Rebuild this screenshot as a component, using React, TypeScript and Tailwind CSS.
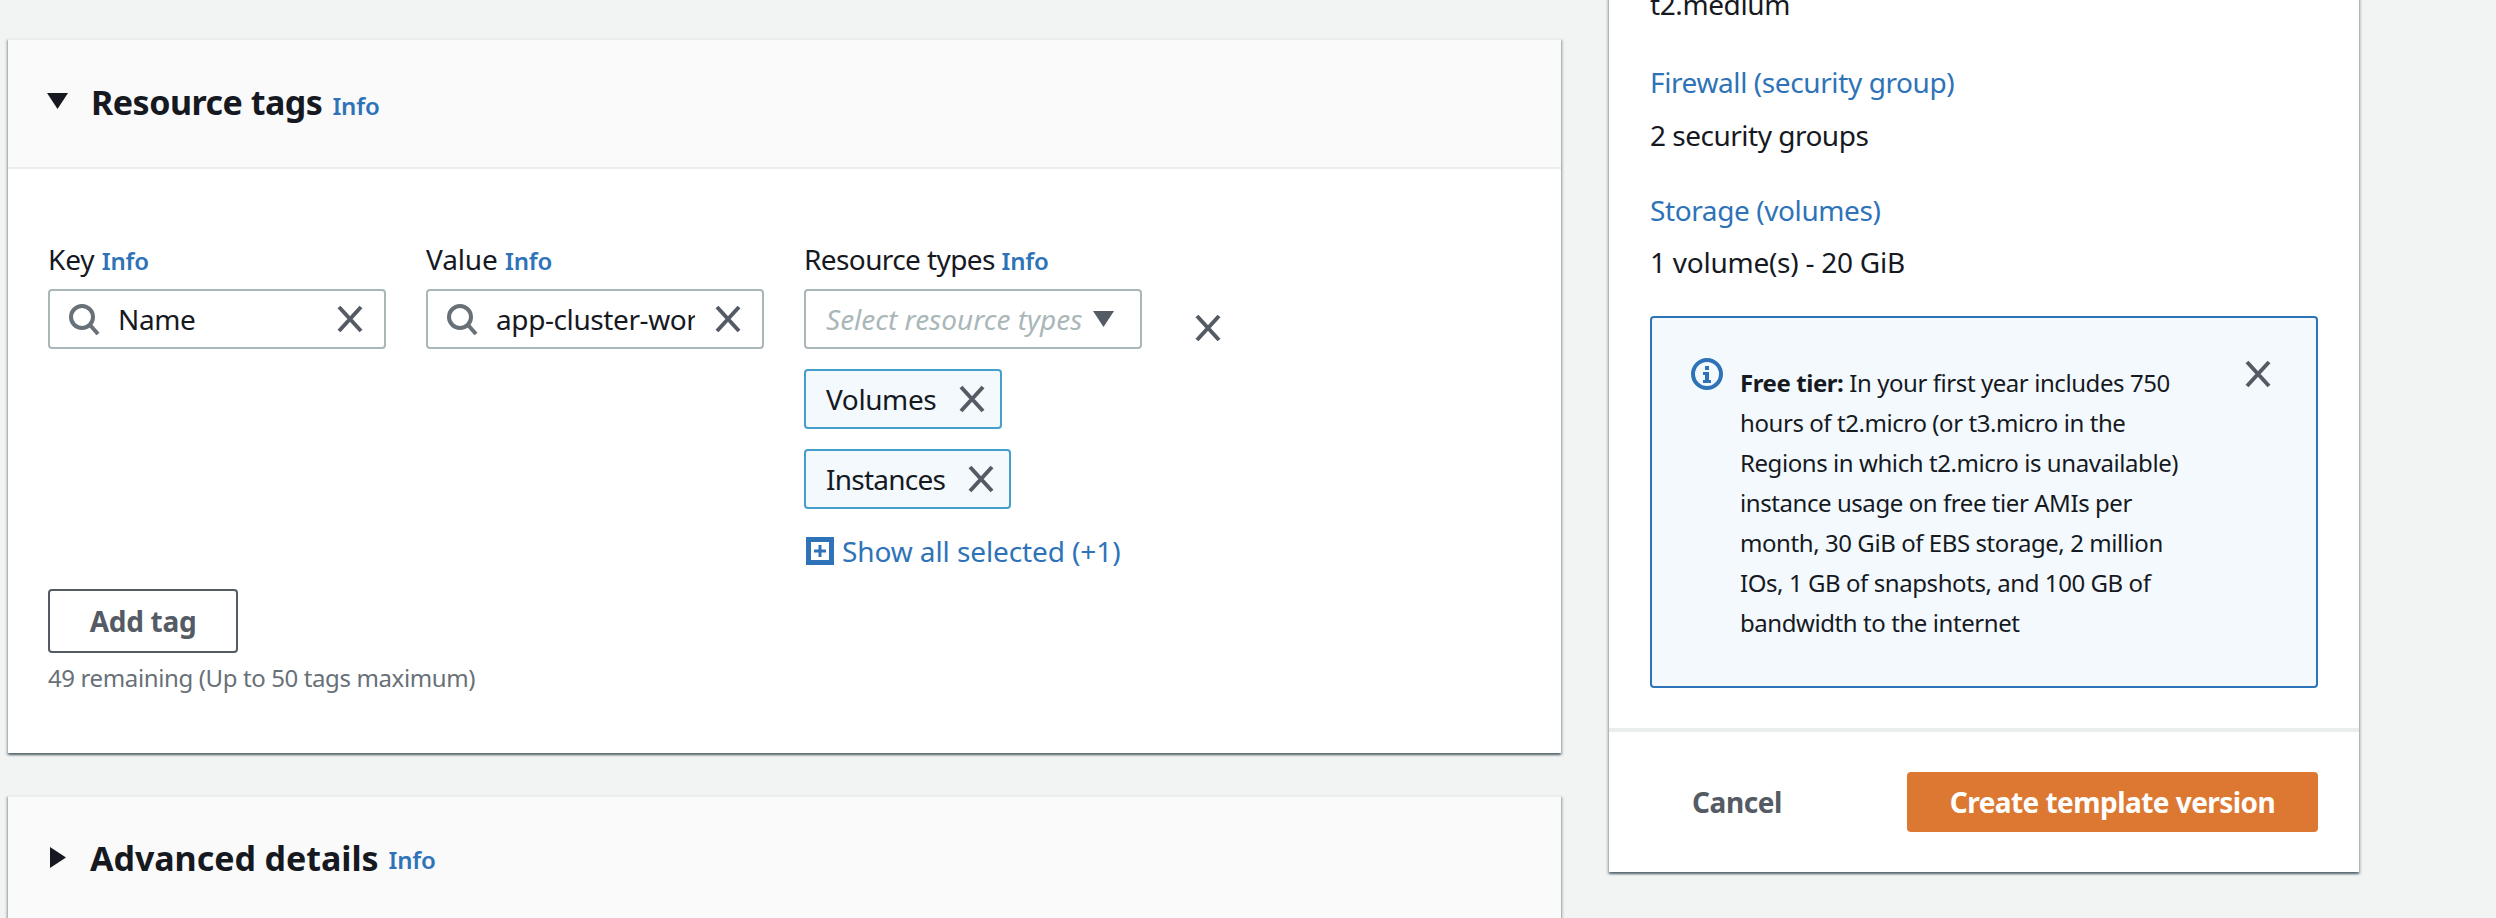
import React from 'react';

const XIcon = ({ className = '' }: { className?: string }) => (
  <svg viewBox="0 0 16 16" className={`h-8 w-8 shrink-0 ${className}`} fill="none" stroke="#545b64" strokeWidth="2">
    <path d="M2.5 2l11 12M13.5 2l-11 12" />
  </svg>
);

const SearchIcon = () => (
  <svg viewBox="0 0 16 16" className="h-8 w-8 shrink-0" fill="none" stroke="#687078" strokeWidth="2">
    <circle cx="7" cy="7" r="5.5" />
    <path d="M11 11l4 4.5" />
  </svg>
);

const Info = ({ className = '' }: { className?: string }) => (
  <span className={`text-[24px] font-semibold leading-[40px] tracking-[-0.2px] text-[#2e73b8] ${className}`}>Info</span>
);

const Field = ({ label, value }: { label: string; value: string }) => (
  <div className="w-[338px]">
    <div className="mb-[10px] h-10 whitespace-nowrap text-[28px] leading-10 tracking-[-0.1px] text-[#16191f]">
      {label} <Info />
    </div>
    <div className="flex h-[60px] items-center rounded-[4px] border-2 border-[#aab7b8] bg-white pl-[18px] pr-[18px]">
      <SearchIcon />
      <span className="ml-[18px] w-[199px] overflow-hidden whitespace-nowrap text-[28px] leading-10 tracking-[-0.4px] text-[#16191f]">{value}</span>
      <XIcon className="ml-auto" />
    </div>
  </div>
);

const Chip = ({ label, tight }: { label: string; tight?: boolean }) => (
  <div className={`flex h-[60px] w-fit items-center rounded-[4px] border-2 border-[#44a0cb] bg-[#f3f9fd] pl-[20px] pr-[12px] text-[28px] text-[#16191f] ${tight ? 'tracking-[-0.75px]' : 'tracking-[-0.4px]'}`}>
    <span>{label}</span>
    <XIcon className="ml-[20px]" />
  </div>
);

const Panel = ({ children }: { children: React.ReactNode }) => (
  <div className="w-[1553px] border-t-2 border-[#eaeded] bg-white shadow-[0_2px_2px_0_rgba(0,28,36,0.5),2px_2px_2px_0_rgba(0,28,36,0.15),-2px_2px_2px_0_rgba(0,28,36,0.15)]">
    {children}
  </div>
);

export default function App() {
  return (
    <div className="flex h-[918px] w-[2496px] items-start gap-12 overflow-hidden bg-[#f2f3f3] pl-2 font-['Noto_Sans',sans-serif]">
      {/* Left column */}
      <div className="flex flex-col gap-[42px] pt-[38px]">
        <Panel>
          <div className="flex h-[129px] items-center border-b-2 border-[#eaeded] bg-[#fafafa] pl-[39px]">
            <svg viewBox="0 0 21 16" className="-mt-[6px] h-4 w-[21px] shrink-0" fill="#16191f">
              <path d="M0 0h21L10.5 16z" />
            </svg>
            <h2 className="-mt-[4px] ml-[23px] text-[34px] font-bold leading-[46px] tracking-[-0.5px] text-[#16191f]">Resource tags</h2>
            <Info className="ml-[10px] mt-[4px]" />
          </div>
          <div className="px-10 pb-[59px] pt-[70px]">
            <div className="flex gap-10">
              <Field label="Key" value="Name" />
              <Field label="Value" value="app-cluster-worker" />
              <div className="w-[338px]">
                <div className="mb-[10px] h-10 whitespace-nowrap text-[28px] leading-10 tracking-[-0.6px] text-[#16191f]">
                  Resource types <Info />
                </div>
                <div className="flex h-[60px] items-center justify-between rounded-[4px] border-2 border-[#aab7b8] bg-white pl-[20px] pr-[26px]">
                  <span className="whitespace-nowrap text-[28px] italic leading-10 text-[#aab7b8]">Select resource types</span>
                  <svg viewBox="0 0 21 16" className="h-4 w-[21px] shrink-0" fill="#545b64">
                    <path d="M0 0h21L10.5 16z" />
                  </svg>
                </div>
                <div className="mt-5 flex flex-col gap-5">
                  <Chip label="Volumes" />
                  <Chip label="Instances" tight />
                </div>
                <div className="mt-[22px] flex items-center gap-2 whitespace-nowrap pl-[2px] text-[28px] leading-10 tracking-[-0.1px] text-[#2e73b8]">
                  <svg viewBox="0 0 28 28" className="h-7 w-7 shrink-0" fill="none" stroke="#2e73b8">
                    <rect x="2.5" y="2.5" width="23" height="23" strokeWidth="5" />
                    <path d="M14 8v12M8 14h12" strokeWidth="3" />
                  </svg>
                  Show all selected (+1)
                </div>
              </div>
              <XIcon className="ml-[10px] mt-[73px]" />
            </div>
            <button className="mt-[18px] block h-16 w-[190px] rounded-[4px] border-2 border-[#545b64] bg-white text-[28px] font-bold tracking-[-0.3px] text-[#545b64]">
              Add tag
            </button>
            <p className="mt-[9px] text-[24px] leading-8 tracking-[-0.38px] text-[#687078]">49 remaining (Up to 50 tags maximum)</p>
          </div>
        </Panel>
        <Panel>
          <div className="flex h-[128px] items-center bg-[#fafafa] pl-[42px]">
            <svg viewBox="0 0 16 21" className="-mt-[7px] h-[21px] w-4 shrink-0" fill="#16191f">
              <path d="M0 0l16 10.5L0 21z" />
            </svg>
            <h2 className="-mt-[6px] ml-[24px] text-[34px] font-bold leading-[46px] tracking-[-0.05px] text-[#16191f]">Advanced details</h2>
            <Info className="-mt-[2px] ml-[10px]" />
          </div>
        </Panel>
      </div>

      {/* Summary column */}
      <div className="-mt-[16px] w-[750px] bg-white shadow-[0_2px_2px_0_rgba(0,28,36,0.5),2px_2px_2px_0_rgba(0,28,36,0.15),-2px_2px_2px_0_rgba(0,28,36,0.15)]">
        <div className="px-[41px] pb-10 text-[28px] leading-10 tracking-[-0.4px] text-[#16191f]">
          <div>t2.medium</div>
          <div className="mt-[38px] text-[#2e73b8]">Firewall (security group)</div>
          <div className="mt-[13px] tracking-[-0.5px]">2 security groups</div>
          <div className="mt-[35px] text-[#2e73b8]">Storage (volumes)</div>
          <div className="mt-3 tracking-[-0.25px]">1 volume(s) - 20 GiB</div>
          <div className="mt-[34px] flex h-[372px] rounded-[4px] border-2 border-[#2e73b8] bg-[#f3f9fd] pl-[39px] pr-[42px] pt-[40px]">
            <svg viewBox="0 0 32 32" className="h-8 w-8 shrink-0" fill="none">
              <circle cx="16" cy="16" r="14" stroke="#2e73b8" strokeWidth="4" />
              <path d="M14 8h4v4h-4zM12 14h6v8h2v3h-8v-3h2v-5h-2z" fill="#2e73b8" />
            </svg>
            <p className="ml-[17px] mt-[5px] whitespace-nowrap text-[24px] leading-10 tracking-[-0.43px] text-[#16191f]">
              <b>Free tier:</b> In your first year includes 750
              <br />
              hours of t2.micro (or t3.micro in the
              <br />
              Regions in which t2.micro is unavailable)
              <br />
              instance usage on free tier AMIs per
              <br />
              month, 30 GiB of EBS storage, 2 million
              <br />
              IOs, 1 GB of snapshots, and 100 GB of
              <br />
              bandwidth to the internet
            </p>
            <XIcon className="ml-auto" />
          </div>
        </div>
        <div className="flex h-[144px] items-center justify-between border-t-4 border-[#eaeded] pl-[83px] pr-[41px]">
          <span className="text-[28px] font-bold tracking-[-0.4px] text-[#545b64]">Cancel</span>
          <button className="h-[60px] w-[411px] rounded-[4px] bg-[#dd7832] text-[28px] font-bold tracking-[-0.55px] text-white">
            Create template version
          </button>
        </div>
      </div>
    </div>
  );
}
